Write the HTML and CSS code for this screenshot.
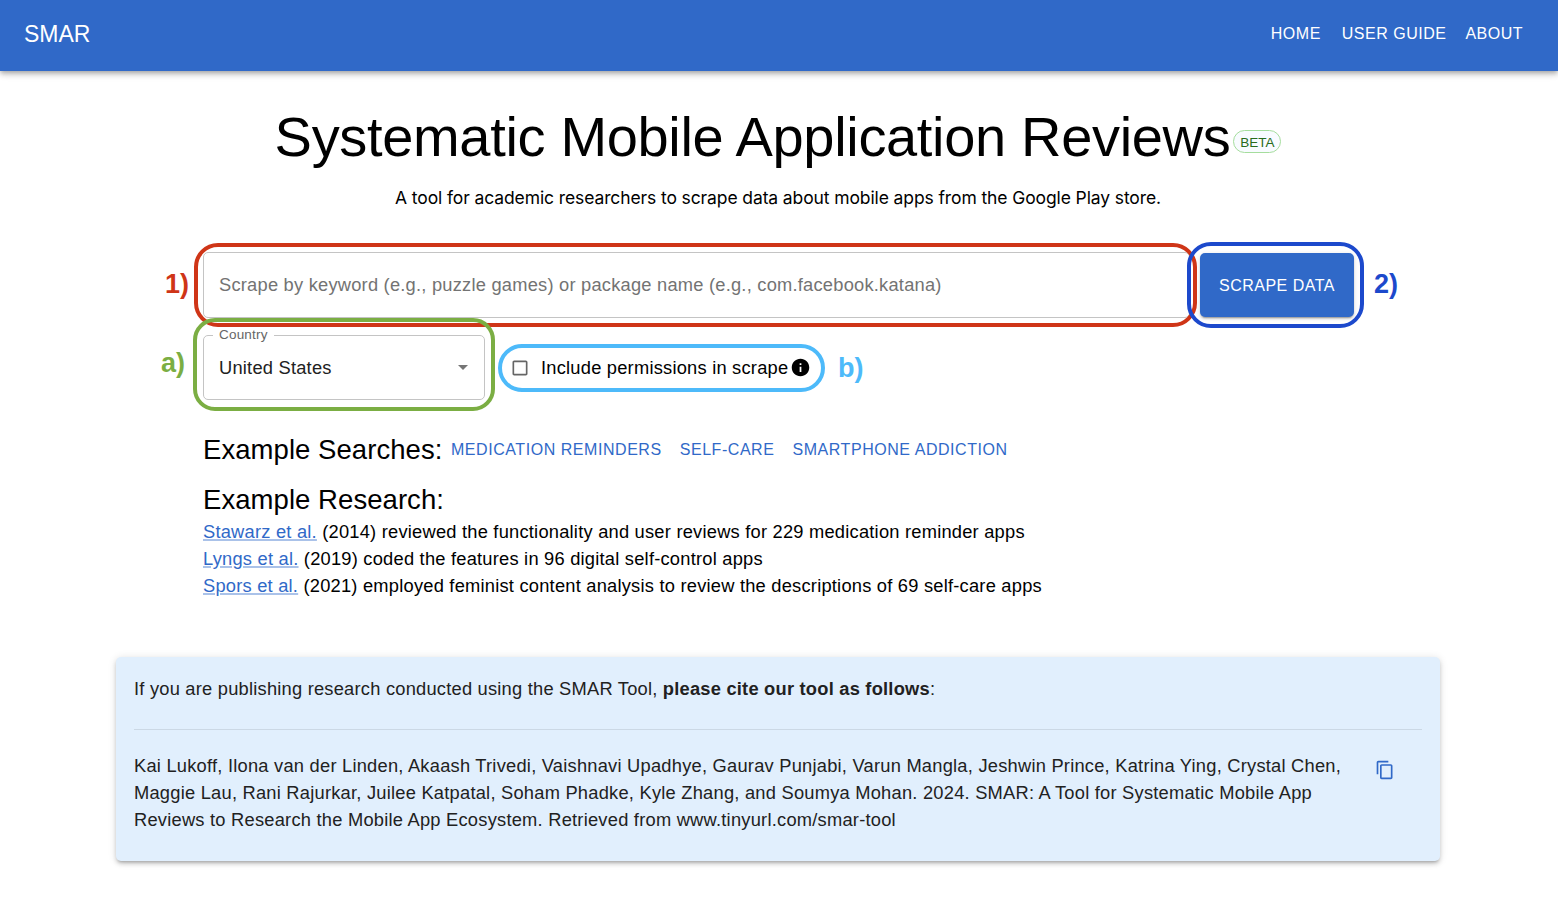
FILE: index.html
```html
<!DOCTYPE html>
<html lang="en">
<head>
<meta charset="utf-8">
<title>SMAR</title>
<link rel="stylesheet" href="styles.css">
</head>
<body>
<header class="appbar">
  <div class="brand"><span>SMAR</span></div>
  <nav class="nav"><a class="n1">HOME</a><a class="n2">USER GUIDE</a><a class="n3">ABOUT</a></nav>
</header>
<main>
  <div class="hero"><h1 class="title"><span>Systematic Mobile Application Reviews</span></h1><span class="beta">BETA</span></div>
  <p class="subtitle"><span>A tool for academic researchers to scrape data about mobile apps from the Google Play store.</span></p>
  <div class="content">
    <div class="search-row">
      <div class="field"><span class="placeholder">Scrape by keyword (e.g., puzzle games) or package name (e.g., com.facebook.katana)</span></div>
      <button class="scrape"><span>SCRAPE DATA</span></button>
    </div>
    <div class="options-row">
      <div class="select"><span class="select-label">Country</span><span class="select-value">United States</span>
        <svg class="caret" viewBox="0 0 10 5"><path d="M0 0h10L5 5z"/></svg>
      </div>
      <label class="check"><svg class="box" viewBox="0 0 24 24"><path d="M19 5v14H5V5h14m0-2H5c-1.100 0-2 .9-2 2v14c0 1.100.9 2 2 2h14c1.100 0 2-.9 2-2V5c0-1.100-.9-2-2-2z"/></svg><span class="check-text">Include permissions in scrape</span><svg class="info" viewBox="0 0 24 24"><path d="M12 2C6.480 2 2 6.480 2 12s4.480 10 10 10 10-4.480 10-10S17.520 2 12 2zm1 15h-2v-6h2v6zm0-8h-2V7h2v2z"/></svg></label>
    </div>
    <div class="examples"><h2 class="heading h-search"><span>Example Searches:</span></h2><a class="e1">MEDICATION REMINDERS</a><a class="e2">SELF-CARE</a><a class="e3">SMARTPHONE ADDICTION</a></div>
    <h2 class="heading h-research"><span>Example Research:</span></h2>
    <ul class="research">
      <li><span class="r1"><a>Stawarz et al.</a> (2014) reviewed the functionality and user reviews for 229 medication reminder apps</span></li>
      <li><span class="r2"><a>Lyngs et al.</a> (2019) coded the features in 96 digital self-control apps</span></li>
      <li><span class="r3"><a>Spors et al.</a> (2021) employed feminist content analysis to review the descriptions of 69 self-care apps</span></li>
    </ul>
  </div>
  <section class="cite">
    <p class="cite-intro"><span>If you are publishing research conducted using the SMAR Tool, <b>please cite our tool as follows</b>:</span></p>
    <div class="cite-body">
      <p class="cite-text"><span>Kai Lukoff, Ilona van der Linden, Akaash Trivedi, Vaishnavi Upadhye, Gaurav Punjabi, Varun Mangla, Jeshwin Prince, Katrina Ying, Crystal Chen,</span><br><span>Maggie Lau, Rani Rajurkar, Juilee Katpatal, Soham Phadke, Kyle Zhang, and Soumya Mohan. 2024. SMAR: A Tool for Systematic Mobile App</span><br><span>Reviews to Research the Mobile App Ecosystem. Retrieved from www.tinyurl.com/smar-tool</span></p>
      <svg class="copy" viewBox="0 0 24 24"><path d="M16 1H4c-1.100 0-2 .9-2 2v14h2V3h12V1zm3 4H8c-1.100 0-2 .9-2 2v14c0 1.100.9 2 2 2h11c1.100 0 2-.9 2-2V7c0-1.100-.9-2-2-2zm0 16H8V7h11v14z"/></svg>
    </div>
  </section>
</main>
<div class="mark m1"></div><div class="mark ma"></div><div class="mark m2"></div><div class="mark mb"></div>
<span class="tag t1">1)</span><span class="tag ta">a)</span><span class="tag t2">2)</span><span class="tag tb">b)</span>
</body>
</html>
```
FILE: styles.css
```css
* { box-sizing: border-box; }
body { margin: 0; height: 915px; position: relative; overflow: hidden; background: #fff; color: #000; font: 18.300px/27px "Liberation Sans", Arial, sans-serif; letter-spacing: 0.225px; }
h1, h2, p, ul { margin: 0; padding: 0; font-weight: 400; list-style: none; }
span, a { white-space: nowrap; }
.appbar { height: 71px; padding: 0 35px 3px 24px; display: flex; align-items: center; justify-content: space-between; background: #3069c8; color: #fff; box-shadow: 0 2px 4px -1px rgba(0,0,0,.2), 0 4px 5px rgba(0,0,0,.14), 0 1px 10px rgba(0,0,0,.12); }
.brand { font-size: 23px; letter-spacing: 0; }
.nav { display: flex; font-size: 16px; letter-spacing: .5px; padding-bottom: 2px; }
.n2 { margin: 0 19px 0 21px; }
.hero { display: flex; justify-content: center; align-items: center; height: 66px; margin-top: 33px; }
.title { font-size: 56px; line-height: 66px; letter-spacing: -.33px; margin-left: -2px; }
.beta { width: 48px; height: 23px; margin: 9px 0 0 3px; border: 1px solid #a5dd9d; border-radius: 12px; background: #f8fbff; color: #286b1c; font-size: 13.500px; letter-spacing: 0; line-height: 23px; text-align: center; }
.subtitle { margin-top: 14px; padding-right: 2px; text-align: center; font-family: Inter, sans-serif; font-size: 17.500px; letter-spacing: -.11px; }
.content { width: 1152px; margin: 41px auto 0; }
.search-row { display: flex; gap: 10px; height: 66px; }
.field { width: 987px; height: 66px; padding: 0 15px 2px; border: 1px solid #c4c4c4; border-radius: 5px; display: flex; align-items: center; color: #737373; }
.scrape { width: 154px; height: 64px; margin-top: 1px; padding: 2px 0 0; border: 0; border-radius: 5px; background: #3069c8; color: #fff; font: 16px "Liberation Sans", Arial, sans-serif; letter-spacing: .5px; box-shadow: 0 3px 1px -2px rgba(0,0,0,.2), 0 2px 2px rgba(0,0,0,.14), 0 1px 5px rgba(0,0,0,.12); }
.options-row { display: flex; align-items: center; margin-top: 17px; height: 65px; }
.select { position: relative; width: 282px; height: 65px; padding: 0 16px 0 15px; border: 1px solid #c4c4c4; border-radius: 5px; display: flex; align-items: center; justify-content: space-between; color: #212121; }
.select-label { position: absolute; left: 9px; top: -11px; padding: 0 6px; background: #fff; color: #666; font-size: 13.500px; letter-spacing: .2px; line-height: 20px; }
.caret { width: 10px; height: 5px; fill: #757575; }
.check { display: flex; align-items: center; padding-left: 25px; height: 27px; }
.box { width: 20px; height: 20px; fill: #666; }
.check-text { margin-left: 11px; }
.info { width: 21px; height: 21px; margin: 0 0 1px 2px; }
.examples { display: flex; align-items: center; height: 36px; margin-top: 32px; }
.heading { font-size: 27.500px; line-height: 36px; letter-spacing: .06px; }
.examples a { color: #3069c8; font-size: 16px; letter-spacing: .55px; padding-bottom: 2px; }
.e1 { margin-left: 8.500px; }
.e2, .e3 { margin-left: 18px; }
.h-research { margin-top: 14px; }
.research { padding-bottom: 1px; }
.research a { color: #3069c8; text-decoration: underline; text-decoration-color: #aac2e9; text-decoration-thickness: 2px; text-underline-offset: 1px; }
.cite { width: 1324px; height: 204px; margin: 57px 0 0 116px; padding: 18px 18px 0; border-radius: 5px; background: #e1effd; color: #212121; box-shadow: 0 3px 3px -2px rgba(0,0,0,.2), 0 3px 4px rgba(0,0,0,.14), 0 1px 8px rgba(0,0,0,.12); }
.cite-intro { height: 55px; border-bottom: 1px solid #cbd8e5; }
.cite-body { display: flex; justify-content: space-between; padding: 22px 27px 0 0; letter-spacing: .235px; }
.copy { width: 20px; height: 20px; margin-top: 8px; fill: #3069c8; }
.mark { position: absolute; border: 4px solid; }
.m1 { left: 194px; top: 243px; width: 1003px; height: 84px; border-color: #cf3517; border-radius: 24px; }
.ma { left: 193px; top: 318px; width: 302px; height: 93px; border-color: #7bae43; border-radius: 22px; }
.m2 { left: 1187px; top: 242px; width: 177px; height: 86px; border-color: #1c49cc; border-radius: 24px; }
.mb { left: 498px; top: 344px; width: 327px; height: 48px; border-color: #4dbafa; border-radius: 24px; }
.tag { position: absolute; font-size: 27px; font-weight: 700; letter-spacing: 0; line-height: 30px; }
.t1 { left: 165px; top: 269px; color: #cf3517; }
.ta { left: 161px; top: 348px; color: #7bae43; }
.t2 { left: 1374px; top: 269px; color: #1c49cc; }
.tb { left: 838px; top: 353px; color: #4dbafa; }
```
